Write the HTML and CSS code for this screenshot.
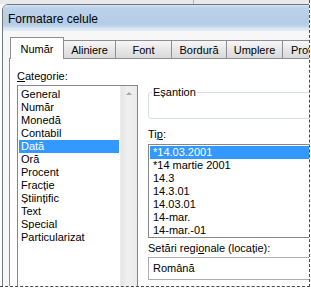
FILE: index.html
```html
<!DOCTYPE html>
<html lang="ro">
<head>
    <meta charset="UTF-8">
    <title>Formatare celule</title>
    <link rel="stylesheet" href="styles.css">
</head>
<body>
    <div class="frame">
        <div class="backdrop"><span class="tick"></span></div>
        <div class="dialog">
            <div class="titlebar">Formatare celule</div>
            <div class="dialog-body">
                <div class="tabs">
                    <div class="tab active">Număr</div>
                    <div class="tab">Aliniere</div>
                    <div class="tab">Font</div>
                    <div class="tab">Bordură</div>
                    <div class="tab">Umplere</div>
                    <div class="tab">Protecție</div>
                </div>
                <div class="panel">
                    <div class="col-left">
                        <div class="label"><u>C</u>ategorie:</div>
                        <div class="listbox categories">
                            <ul class="items">
                                <li>General</li>
                                <li>Număr</li>
                                <li>Monedă</li>
                                <li>Contabil</li>
                                <li class="selected">Dată</li>
                                <li>Oră</li>
                                <li>Procent</li>
                                <li>Fracție</li>
                                <li>Științific</li>
                                <li>Text</li>
                                <li>Special</li>
                                <li>Particularizat</li>
                            </ul>
                            <div class="scrollbar"><span class="arrow-up"></span></div>
                        </div>
                    </div>
                    <div class="col-right">
                        <fieldset class="sample">
                            <legend>Eșantion</legend>
                        </fieldset>
                        <div class="label tip-label">Ti<u>p</u>:</div>
                        <ul class="listbox types">
                            <li class="selected">*14.03.2001</li>
                            <li>*14 martie 2001</li>
                            <li>14.3</li>
                            <li>14.3.01</li>
                            <li>14.03.01</li>
                            <li>14-mar.</li>
                            <li>14-mar.-01</li>
                        </ul>
                        <div class="label locale-label">Setări regi<u>o</u>nale (locație):</div>
                        <div class="combo">Română</div>
                    </div>
                </div>
            </div>
        </div>
    </div>
</body>
</html>
```

FILE: styles.css
```css
html, body {
    margin: 0;
    background: #fff;
    font-family: 'Liberation Sans', Arial, sans-serif;
    font-size: 11px;
    color: #000;
}
.frame {
    width: 309px;
    height: 286px;
    overflow: hidden;
    border-right: 1px dashed #4a4a4a;
    border-bottom: 1px dashed #4a4a4a;
}
.backdrop {
    height: 4px;
    background: #e9e9e9;
    position: relative;
}
.tick {
    position: absolute;
    left: 193px;
    top: 0;
    width: 1px;
    height: 4px;
    background: #b5b5b5;
}
.dialog {
    margin-left: 2px;
    width: 330px;
    height: 300px;
    border: 1px solid #6e7783;
    border-radius: 6px 6px 0 0;
    background: #f7f7f7;
}
.titlebar {
    height: 26px;
    line-height: 28px;
    padding-left: 5px;
    font-size: 12px;
    border-radius: 5px 5px 0 0;
    background: linear-gradient(to bottom, #d5e3f2 0, #bcd2ea 3px, #b4cce7 18px, #bcd2ea 21px, #d6e4f2 23px, #e6eef7 26px);
}
.dialog-body {
    padding: 6px 0 0 6px;
}
.tabs {
    display: flex;
    align-items: flex-end;
    height: 21px;
    margin-left: 1px;
    position: relative;
    z-index: 1;
}
.tab {
    flex: none;
    height: 18px;
    line-height: 18px;
    box-sizing: border-box;
    border: 1px solid #8c8e94;
    border-bottom: none;
    border-left: none;
    background: linear-gradient(to bottom, #f7f7f7, #e4e4e4 60%, #dadada);
    text-align: center;
    white-space: nowrap;
}
.tab:nth-child(2) { width: 52px; }
.tab:nth-child(3) { width: 56px; }
.tab:nth-child(4) { width: 55px; }
.tab:nth-child(5) { width: 56px; }
.tab:nth-child(6) { width: 60px; text-align: left; padding-left: 8px; }
.tab.active {
    width: 54px;
    height: 22px;
    line-height: 22px;
    border-left: 1px solid #8c8e94;
    background: #fff;
    margin-bottom: -1px;
}
.panel {
    display: flex;
    gap: 10px;
    height: 260px;
    padding: 11px 0 0 7px;
    background: #fff;
    border: 1px solid #8c8e94;
    border-right: none;
}
.label {
    height: 13px;
    line-height: 13px;
}
.label u {
    text-decoration-thickness: 1px;
    text-underline-offset: 1px;
}
.col-left {
    width: 121px;
    flex: none;
}
.listbox {
    margin: 0;
    padding: 0;
    list-style: none;
    border: 1px solid #828790;
    background: #fff;
}
.categories {
    margin-top: 2px;
    height: 220px;
    display: flex;
}
.items {
    flex: 1;
    margin: 0;
    padding: 2px 1px 0 1px;
    list-style: none;
}
.items li, .types li {
    height: 13px;
    line-height: 13px;
    padding-left: 2px;
}
.selected {
    background: #3399ff;
    color: #fff;
}
.scrollbar {
    width: 16px;
    flex: none;
    background: linear-gradient(to right, #e4e4e4, #f0f0f0 40%, #ebebeb);
    border-left: 1px solid #ececec;
    position: relative;
}
.arrow-up {
    position: absolute;
    left: 5px;
    top: 6px;
    border-left: 3px solid transparent;
    border-right: 3px solid transparent;
    border-bottom: 3px solid #a7a7a7;
}
.col-right {
    width: 200px;
    flex: none;
    padding-top: 16px;
}
.sample {
    margin: 0;
    padding: 0;
    height: 31px;
    border: 1px solid #d5dfe5;
    border-radius: 3px;
}
.sample legend {
    margin-left: 3px;
    padding: 0 1px;
    line-height: 13px;
}
.tip-label {
    margin-top: 9px;
}
.types {
    margin-top: 3px;
    padding: 1px 0 0 1px;
    height: 91px;
}
.types li {
    padding-left: 3px;
}
.locale-label {
    margin-top: 4px;
}
.combo {
    margin-top: 2px;
    height: 21px;
    line-height: 21px;
    padding-left: 4px;
    border: 1px solid #abadb3;
    border-right: none;
}
```
